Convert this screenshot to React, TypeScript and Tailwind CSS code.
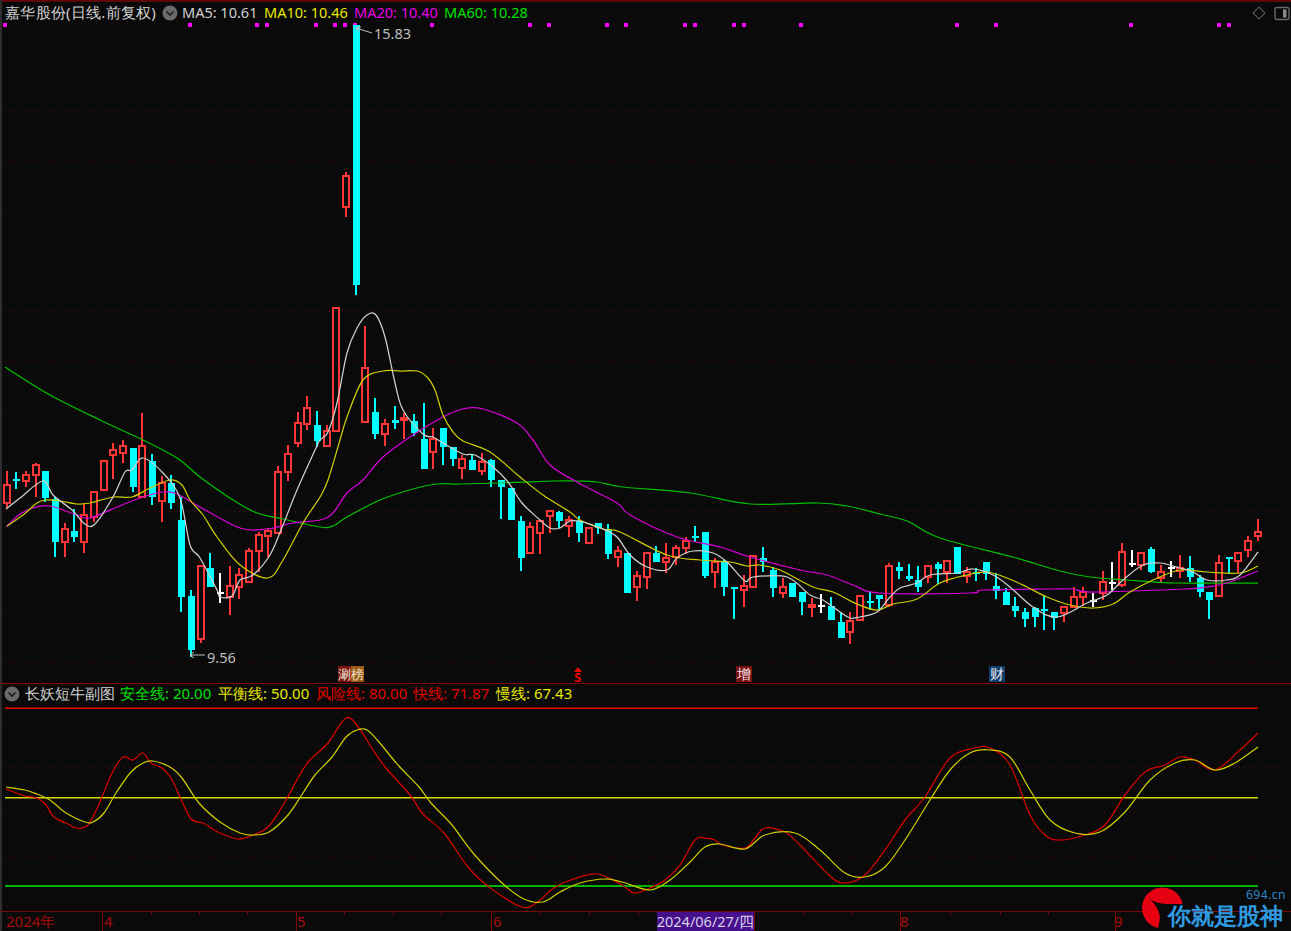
import React from "react";

type C = [string, number, number, number, number];
// kind, wick top, body top, body bottom, wick bottom
const candles: C[] = [
  ["r",471,485,503,508],["c",472,479,481,489],["r",471,475,481,487],["r",463,465,475,497],["c",471,471,498,502],
  ["c",497,499,542,557],["r",523,529,542,557],["c",509,531,537,542],["r",503,515,542,553],["r",492,492,517,522],
  ["r",461,461,490,490],["r",443,450,455,479],["r",440,446,453,463],["c",448,448,487,492],["r",413,446,497,498],
  ["c",454,461,497,505],["r",476,483,501,522],["c",475,483,503,509],["c",497,520,597,612],["c",590,596,650,657],
  ["r",566,566,639,643],["c",553,568,587,587],["w",573,592,592,603],["r",566,586,597,615],["r",568,575,587,599],
  ["r",548,551,582,583],["r",532,535,551,572],["r",528,531,536,557],["r",466,472,533,533],["r",445,454,472,481],
  ["r",412,423,443,447],["r",396,408,424,430],["c",411,425,441,447],["r",425,431,446,446],["r",308,308,431,431],
  ["r",172,176,207,217],["c",25,25,285,295],["r",326,368,422,422],["c",398,412,434,439],["r",419,424,434,446],
  ["c",406,420,423,429],["r",413,418,420,439],["c",414,421,433,436],["c",403,439,469,469],["r",428,439,452,469],
  ["c",428,428,447,465],["c",447,447,459,466],["r",455,459,468,479],["c",455,460,470,470],["r",453,462,471,475],
  ["c",459,460,480,487],["c",480,480,487,519],["c",488,488,520,520],["c",516,521,558,571],["r",522,527,553,553],
  ["r",520,521,533,554],["r",511,511,516,533],["c",511,512,521,528],["r",516,520,526,537],["c",516,521,533,542],
  ["r",528,528,543,543],["c",523,523,528,534],["c",524,530,554,559],["r",546,551,557,567],["c",553,553,593,593],
  ["r",571,576,587,601],["r",552,553,577,589],["c",546,553,562,562],["r",543,558,562,573],["r",545,548,557,565],
  ["r",537,541,548,554],["c",526,536,538,542],["c",532,532,576,578],["r",558,562,572,588],["c",560,562,587,596],
  ["c",587,587,588,619],["r",575,586,590,607],["r",556,556,587,587],["c",547,558,562,572],["c",567,570,588,597],
  ["r",578,587,593,598],["c",583,583,597,597],["c",592,592,602,615],["r",598,605,607,617],["w",594,605,605,613],
  ["c",597,606,620,620],["c",612,622,638,638],["r",612,621,632,644],["r",596,596,620,620],["c",592,601,603,610],
  ["c",595,595,599,610],["r",563,566,605,607],["c",562,567,571,579],["c",564,576,579,581],["c",566,580,587,592],
  ["r",565,566,577,583],["c",562,564,569,584],["r",561,561,572,583],["c",547,547,574,574],["r",567,572,576,583],
  ["c",568,572,573,581],["c",562,562,574,580],["c",573,586,591,599],["c",588,592,605,605],["c",597,606,611,617],
  ["c",608,612,619,627],["c",607,608,617,627],["c",596,609,611,630],["c",612,612,618,630],["r",606,607,613,622],
  ["r",587,597,607,607],["r",587,592,597,606],["w",593,600,600,607],["r",571,582,593,600],["w",562,582,582,590],
  ["r",543,552,585,587],["w",550,563,563,567],["r",552,553,565,570],["c",547,549,572,573],["r",565,572,578,582],
  ["w",561,567,567,577],["r",555,568,571,578],["c",556,568,577,582],["c",575,578,592,597],["c",592,592,600,619],
  ["r",555,563,596,597],["c",557,557,559,574],["r",553,553,561,573],["r",536,541,550,557],["r",519,532,536,541],
];

// Catmull-Rom through the sampled chart points
const curve = (a: number[][]) => {
  let d = `M${a[0][0]} ${a[0][1]}`;
  for (let i = 0; i < a.length - 1; i++) {
    const p0 = a[Math.max(i - 1, 0)];
    const p1 = a[i];
    const p2 = a[i + 1];
    const p3 = a[Math.min(i + 2, a.length - 1)];
    const c1x = p1[0] + (p2[0] - p0[0]) / 6;
    const c1y = p1[1] + (p2[1] - p0[1]) / 6;
    const c2x = p2[0] - (p3[0] - p1[0]) / 6;
    const c2y = p2[1] - (p3[1] - p1[1]) / 6;
    d += ` C${c1x} ${c1y} ${c2x} ${c2y} ${p2[0]} ${p2[1]}`;
  }
  return d;
};

const ma60 = [[5,367],[50,395],[100,420],[143,440],[177,458],[200,477],[233,500],[257,513],[283,519],[320,527],[333,526],[347,517],[380,500],[413,489],[437,484],[460,484],[500,483],[553,481],[577,481],[597,482],[623,487],[690,493],[750,504],[817,503],[847,506],[880,514],[907,521],[940,538],[1013,557],[1060,571],[1090,577],[1127,580],[1177,583],[1258,583]];
const ma20 = [[6,527],[20,514],[33,508],[50,506],[77,515],[90,518],[117,507],[143,497],[163,492],[177,494],[200,507],[240,528],[267,529],[293,523],[320,520],[333,513],[347,493],[363,480],[383,457],[413,435],[443,417],[463,409],[483,409],[517,423],[533,440],[550,465],[577,482],[617,503],[630,515],[677,537],[720,547],[750,557],[800,570],[827,575],[853,585],[880,593],[970,593],[983,590],[1050,589],[1073,589],[1093,592],[1185,589],[1207,587],[1227,583],[1258,571]];
const ma10 = [[7,526],[23,515],[37,503],[45,500],[60,501],[77,504],[90,503],[113,497],[132,497],[150,488],[170,480],[182,485],[190,500],[203,515],[217,537],[240,565],[268,578],[283,560],[303,523],[320,497],[328,480],[340,440],[347,417],[363,380],[383,371],[400,371],[417,371],[427,377],[435,390],[443,415],[453,432],[463,441],[490,452],[520,477],[543,495],[570,512],[580,520],[603,529],[620,532],[667,555],[700,560],[730,562],[747,566],[760,565],[780,570],[813,587],[833,592],[857,604],[877,610],[893,604],[917,599],[940,583],[967,575],[987,572],[1007,578],[1027,587],[1047,597],[1070,605],[1093,608],[1113,604],[1130,592],[1153,580],[1180,570],[1207,572],[1240,573],[1258,566]];
const ma5 = [[6,509],[20,498],[43,481],[53,495],[72,510],[85,524],[95,524],[113,497],[125,472],[132,470],[143,458],[163,473],[180,498],[190,545],[200,558],[217,590],[220,597],[232,596],[240,580],[253,575],[270,555],[283,525],[297,490],[315,450],[320,440],[328,432],[337,403],[347,353],[357,328],[367,315],[376,315],[385,337],[395,383],[403,410],[423,434],[433,437],[443,443],[463,454],[475,455],[493,467],[508,482],[522,503],[540,520],[550,528],[560,528],[570,521],[583,522],[603,529],[617,537],[630,555],[647,567],[667,570],[677,558],[693,551],[713,553],[727,562],[745,581],[753,577],[787,577],[810,595],[823,600],[840,612],[850,618],[860,617],[877,612],[890,597],[900,588],[917,583],[930,575],[957,573],[973,569],[993,575],[1010,587],[1033,607],[1057,617],[1087,603],[1107,595],[1123,580],[1143,565],[1160,563],[1180,568],[1193,572],[1207,580],[1227,580],[1240,575],[1258,552]];

const fast = [[6,789],[25,796],[37,798],[46,805],[54,817],[66,823],[76,828],[87,826],[95,813],[104,792],[112,773],[123,757],[133,760],[143,753],[151,763],[162,768],[171,778],[180,797],[191,819],[203,823],[220,833],[238,839],[253,835],[269,826],[286,800],[298,778],[309,761],[328,743],[346,718],[359,728],[373,750],[386,768],[410,795],[423,814],[444,833],[468,867],[489,887],[522,907],[539,901],[551,890],[568,881],[597,874],[622,885],[634,893],[650,888],[665,880],[680,865],[695,840],[705,838],[715,840],[722,845],[745,848],[755,838],[765,828],[785,832],[800,845],[830,876],[845,883],[865,875],[885,850],[905,820],[925,797],[950,758],[975,748],[990,748],[1010,765],[1030,815],[1045,835],[1060,840],[1085,835],[1105,825],[1125,795],[1145,772],[1165,765],[1180,757],[1195,760],[1215,770],[1240,750],[1258,733]];
const slow = [[6,787],[25,790],[37,794],[50,800],[66,813],[85,822],[93,822],[104,813],[116,793],[131,772],[143,763],[153,761],[170,767],[182,778],[199,803],[220,822],[240,833],[253,835],[269,832],[288,815],[303,793],[315,775],[332,757],[346,737],[357,730],[367,730],[379,742],[398,765],[419,787],[431,803],[452,825],[473,853],[502,883],[524,899],[543,902],[560,892],[580,883],[605,879],[622,882],[650,890],[670,880],[690,862],[705,847],[720,844],[745,849],[765,835],[795,833],[820,850],[845,873],[865,877],[885,867],[905,840],[930,800],[950,770],[970,753],[990,750],[1010,757],[1030,790],[1050,820],[1075,833],[1100,832],[1125,812],[1150,780],[1175,763],[1195,760],[1215,770],[1235,763],[1258,747]];

const dots = [5,190,257,267,316,335,345,355,432,530,549,607,626,685,695,734,744,801,957,996,1131,1219,1229];
const gridY = [61,111,161,211,261,311,361,411,461,511,562,612,662,723,767,812,857];
const axisX = [102,296,491,657,754,900,1115];
const smallTicks = [151,199,247,344,393,441,540,589,638,803,851,950,1000,1048,1165,1213,1262];

function Chevron({ cls }: { cls: string }) {
  return (
    <svg className={cls} width="16" height="16" viewBox="0 0 16 16">
      <circle cx="8" cy="8" r="7.5" fill="#6a6a6a" />
      <path d="M4.5 6.5 L8 10 L11.5 6.5" fill="none" stroke="#1c1c1c" strokeWidth="1.6" />
    </svg>
  );
}

const font = "font-['Liberation_Sans','Noto_Sans_CJK_SC',sans-serif]";

export default function App() {
  return (
    <div className={`relative w-[1291px] h-[931px] overflow-hidden bg-[#0a0a0a] ${font}`}>
      <svg className="absolute left-0 top-0" width="1291" height="931" viewBox="0 0 1291 931">
        <rect x="0" y="0" width="1291" height="2" fill="#5c0808" />
        <rect x="0" y="0" width="2" height="931" fill="#2e2e2e" />
        {gridY.map((y) => (
          <line key={y} x1="4" x2="1291" y1={y + 0.5} y2={y + 0.5} stroke="#5a0a0a" strokeDasharray="1 4" />
        ))}
        <rect x="0" y="683" width="1291" height="1" fill="#7a0a0a" />
        <rect x="0" y="911" width="1291" height="1" fill="#7a0a0a" />
        {axisX.map((x) => (
          <rect key={x} x={x} y="911" width="1" height="20" fill="#7a0a0a" />
        ))}
        {smallTicks.map((x) => (
          <rect key={x} x={x} y="911" width="1" height="4" fill="#7a0a0a" />
        ))}
        {dots.map((x) => (
          <rect key={x} x={x - 2} y="23" width="4" height="4" fill="#ff00ff" />
        ))}
        <g shapeRendering="crispEdges">
          {candles.map(([k, wt, bt, bb, wb], i) => {
            const x = Math.round(6.5 + 9.7 * i);
            const col = k === "r" ? "#ff3636" : k === "c" ? "#00ffff" : "#ffffff";
            if (k === "r") {
              return (
                <g key={i}>
                  {wt < bt && <rect x={x - 1} y={wt} width="2" height={bt - wt} fill={col} />}
                  {wb > bb && <rect x={x - 1} y={bb} width="2" height={wb - bb} fill={col} />}
                  <rect x={x - 3} y={bt} width="6" height={Math.max(bb - bt, 2)} fill="#0a0a0a" stroke={col} strokeWidth="2" />
                </g>
              );
            }
            return (
              <g key={i}>
                <rect x={x - 1} y={wt} width="2" height={wb - wt} fill={col} />
                <rect x={x - 3} y={bt} width="7" height={Math.max(bb - bt, 2)} fill={col} />
              </g>
            );
          })}
        </g>
        <g fill="none" strokeWidth="1.25" strokeLinejoin="round">
          <path d={curve(ma60)} stroke="#00c000" />
          <path d={curve(ma20)} stroke="#d800d8" />
          <path d={curve(ma10)} stroke="#cccc00" />
          <path d={curve(ma5)} stroke="#cfcfcf" />
        </g>
        <path d="M356 28 L372 33 M356 28 L361 27 M356 28 L359 32" fill="none" stroke="#bdbdbd" strokeWidth="1" />
        <path d="M190 655 L205 655 M190 655 L194 652 M190 655 L194 658" fill="none" stroke="#bdbdbd" strokeWidth="1" />

        <rect x="5" y="707.5" width="1253" height="1.5" fill="#f00000" />
        <rect x="5" y="797" width="1253" height="1.5" fill="#d8d800" />
        <rect x="5" y="885" width="1253" height="2" fill="#00b400" />
        <g fill="none" strokeWidth="1.25" strokeLinejoin="round">
          <path d={curve(fast)} stroke="#d80000" />
          <path d={curve(slow)} stroke="#cccc00" />
        </g>

        {/* top right icons */}
        <path d="M1259 7 L1265 13 L1259 19 L1253 13 Z" fill="none" stroke="#555555" strokeWidth="1.2" />
        <rect x="1275" y="7.5" width="14" height="12" rx="2" fill="none" stroke="#6a6a6a" strokeWidth="1.4" />
        <rect x="1283" y="9.5" width="3.5" height="8" fill="#8a8a8a" />

        {/* logo */}
        <circle cx="1162.5" cy="908" r="20.5" fill="#e60012" />
        <path d="M1147 897 C1153 902 1160 904 1168 904 L1192 904 L1192 931 L1157 931 C1159 924 1161 919 1159 913 C1157 907 1154 902 1147 897 Z" fill="#0a0a0a" />
      </svg>

      <Chevron cls="absolute left-[162px] top-[5px]" />
      <Chevron cls="absolute left-[4px] top-[686px]" />

      <div className="absolute left-[5px] top-[3px] text-[15px] leading-[18px] tracking-[0.25px] text-[#d0d0d0] whitespace-nowrap">嘉华股份(日线.前复权)</div>
      <div className="absolute left-[182px] top-[4px] text-[14.5px] leading-[17px] text-[#d0d0d0] whitespace-nowrap">MA5: 10.61</div>
      <div className="absolute left-[264px] top-[4px] text-[14.5px] leading-[17px] text-[#e8e800] whitespace-nowrap">MA10: 10.46</div>
      <div className="absolute left-[354px] top-[4px] text-[14.5px] leading-[17px] text-[#e800e8] whitespace-nowrap">MA20: 10.40</div>
      <div className="absolute left-[444px] top-[4px] text-[14.5px] leading-[17px] text-[#00e000] whitespace-nowrap">MA60: 10.28</div>

      <div className="absolute left-[374px] top-[25px] text-[14.5px] leading-[17px] text-[#bdbdbd]">15.83</div>
      <div className="absolute left-[207px] top-[649px] text-[14.5px] leading-[17px] text-[#bdbdbd]">9.56</div>

      <div className="absolute left-[338px] top-[666px] flex h-[16px] text-[13px] leading-[16px] text-[#f0e0d0]">
        <span className="w-[13px] bg-[#7a1410]">涮</span>
        <span className="w-[13px] bg-[#9a5a14]">榜</span>
      </div>
      <svg className="absolute left-[574px] top-[667px]" width="8" height="6" viewBox="0 0 8 6"><path d="M4 0 L8 5 L0 5 Z" fill="#f00000" /></svg>
      <div className="absolute left-[574px] top-[671px] text-[13px] leading-[12px] font-bold text-[#f00000]">S</div>
      <div className="absolute left-[736px] top-[666px] h-[16px] w-[16px] bg-[#7a1010] text-center text-[14px] leading-[16px] text-[#f4e8e8]">增</div>
      <div className="absolute left-[989px] top-[666px] h-[16px] w-[16px] bg-[#123c68] text-center text-[14px] leading-[16px] text-[#e8eef4]">财</div>

      <div className="absolute left-[25px] top-[684px] text-[15px] leading-[18px] text-[#d0d0d0] whitespace-nowrap">长妖短牛副图</div>
      <div className="absolute left-[120px] top-[684px] text-[15px] leading-[18px] text-[#00e000] whitespace-nowrap">安全线: 20.00</div>
      <div className="absolute left-[218px] top-[684px] text-[15px] leading-[18px] text-[#e8e800] whitespace-nowrap">平衡线: 50.00</div>
      <div className="absolute left-[316px] top-[684px] text-[15px] leading-[18px] text-[#e00000] whitespace-nowrap">风险线: 80.00</div>
      <div className="absolute left-[413px] top-[684px] text-[15px] leading-[18px] text-[#e00000] whitespace-nowrap">快线: 71.87</div>
      <div className="absolute left-[496px] top-[684px] text-[15px] leading-[18px] text-[#e8e800] whitespace-nowrap">慢线: 67.43</div>

      <div className="absolute left-[6px] top-[913px] text-[15px] leading-[17px] text-[#a80c0c]">2024年</div>
      <div className="absolute left-[104px] top-[913px] text-[15px] leading-[17px] text-[#a80c0c]">4</div>
      <div className="absolute left-[297px] top-[913px] text-[15px] leading-[17px] text-[#a80c0c]">5</div>
      <div className="absolute left-[493px] top-[913px] text-[15px] leading-[17px] text-[#a80c0c]">6</div>
      <div className="absolute left-[657px] top-[912px] flex h-[19px] w-[97px] items-center justify-center bg-[#46108c] text-[14.5px] text-[#d8d0e8] whitespace-nowrap">2024/06/27/四</div>
      <div className="absolute left-[900px] top-[913px] text-[15px] leading-[17px] text-[#a80c0c]">8</div>
      <div className="absolute left-[1114px] top-[913px] text-[15px] leading-[17px] text-[#a80c0c]">9</div>

      <div className="absolute left-[1246px] top-[889px] text-[12px] leading-[12px] tracking-[0.5px] text-[#2a86c8]">694.cn</div>
      <div className="absolute left-[1168px] top-[904px] text-[23.4px] leading-[22px] font-bold text-[#2f9ae0] whitespace-nowrap">你就是股神</div>
    </div>
  );
}
